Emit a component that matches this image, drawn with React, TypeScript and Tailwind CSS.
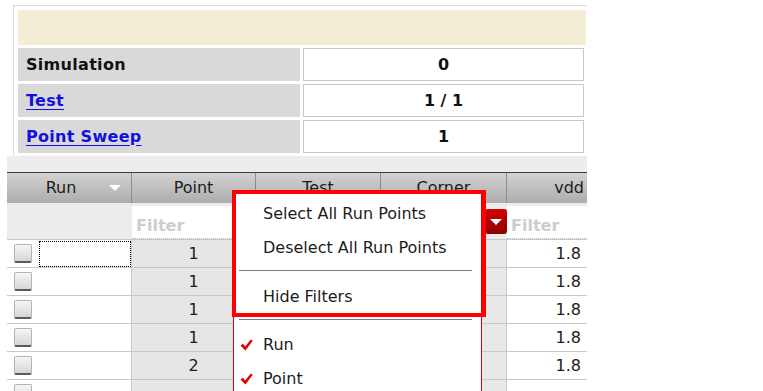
import React from "react";

const FONT = "font-['DejaVu_Sans',sans-serif]";
const COLS = "grid grid-cols-[125px_124px_125px_126px_80px]";

const SUMMARY = [
  { label: "Simulation", value: "0", link: false },
  { label: "Test", value: "1 / 1", link: true },
  { label: "Point Sweep", value: "1", link: true },
];

// last row is only partly in view, its values sit below the fold
const ROWS = [
  { point: "1", vdd: "1.8" },
  { point: "1", vdd: "1.8" },
  { point: "1", vdd: "1.8" },
  { point: "1", vdd: "1.8" },
  { point: "2", vdd: "1.8" },
  { point: "", vdd: "" },
];

/* ============================================================
   Small drawings
   ============================================================ */

function DownTriangle({ className = "" }: { className?: string }) {
  return (
    <svg width="12" height="6" viewBox="0 0 12 6" className={className} aria-hidden="true">
      <path d="M0 0 L12 0 L6 6 Z" fill="#ffffff" />
    </svg>
  );
}

function Check() {
  return (
    <svg width="13" height="12" viewBox="0 0 13 12" aria-hidden="true">
      <path d="M0.5 6.5 L3 4.8 L5.2 7.6 L10.8 0.5 L12.8 1.8 L5.4 11.5 Z" fill="#e00000" />
    </svg>
  );
}

function CheckBox() {
  return (
    <span className="block w-[18px] h-[19px] rounded-[2px] border border-[#b4b4b4] border-b-[2px] border-b-[#5a5a5a] bg-gradient-to-b from-[#f6f6f6] to-[#d6d6d6]" />
  );
}

/* ============================================================
   Summary block
   ============================================================ */

function Summary() {
  return (
    <div className="ml-[13px] mt-[5px] w-[574px] border-t border-l border-[#dcdcdc] pt-[4px] pl-[4px] pb-[3px]">
      <div className="w-[568px] h-[35px] bg-[#f5eed6]" />
      <div className="flex flex-col gap-[3px] mt-[3px]">
        {SUMMARY.map((r) => (
          <div key={r.label} className="flex gap-[3px] h-[33px]">
            <div className="w-[282px] bg-[#d9d9d9] flex items-center pl-[8px] text-[16px] font-bold tracking-[0.3px]">
              {r.link ? (
                <span className="text-[#1010e0] underline underline-offset-[3px]">{r.label}</span>
              ) : (
                <span className="text-[#111]">{r.label}</span>
              )}
            </div>
            <div className="w-[281px] bg-white border border-[#c8c8c8] flex items-center justify-center text-[16px] font-bold text-[#111]">
              {r.value}
            </div>
          </div>
        ))}
      </div>
    </div>
  );
}

/* ============================================================
   Results table
   ============================================================ */

function HeaderRow() {
  const cell =
    "h-[30px] flex items-center border-r border-[#8c8c8c] text-[16px] text-[#1c1c1c]";
  return (
    <div className={`${COLS} bg-gradient-to-b from-[#d2d2d2] to-[#adadad] border-t border-[#3c3c3c]`}>
      <div className={`${cell} pl-[6px]`}>
        <span className="flex-1 text-center">Run</span>
        <DownTriangle className="mr-[10px]" />
      </div>
      <div className={`${cell} justify-center`}>Point</div>
      <div className={`${cell} justify-center`}>Test</div>
      <div className={`${cell} justify-center`}>Corner</div>
      <div className={`${cell} justify-end pr-[3px] border-r-0`}>vdd</div>
    </div>
  );
}

function FilterBox() {
  return (
    <div className="mt-[3px] h-[33px] bg-white border-b border-dotted border-[#b8b8b8] flex items-center pt-[8px] pl-[4px] text-[16px] font-bold text-[#cdcdcd]">
      Filter
    </div>
  );
}

function FilterRow() {
  return (
    <div className={`${COLS} h-[37px] bg-[#ececec] border-b border-[#c8c8c8]`}>
      <div />
      <FilterBox />
      <FilterBox />
      <div className="flex justify-end items-start pt-[6px]">
        <div className="w-[22px] h-[25px] rounded-[3px] bg-gradient-to-b from-[#d60000] to-[#8c0000] flex items-center justify-center">
          <DownTriangle />
        </div>
      </div>
      <FilterBox />
    </div>
  );
}

function DataRow({ point, vdd, focused }: { point: string; vdd: string; focused: boolean }) {
  const cell = "h-[28px] border-r border-b border-[#c9c9c9] flex items-center text-[16px] text-[#1c1c1c]";
  return (
    <div className={COLS}>
      <div className={`${cell} pl-[7px] gap-[7px] bg-white`}>
        <CheckBox />
        {focused && <span className="flex-1 h-[26px] border border-dotted border-black" />}
      </div>
      <div className={`${cell} justify-center bg-[#e6e6e6]`}>{point}</div>
      <div className={`${cell} bg-white`} />
      <div className={`${cell} bg-[#e8e8e8]`} />
      <div className={`${cell} justify-end pr-[6px] bg-white border-r-0`}>{vdd}</div>
    </div>
  );
}

function ResultsTable() {
  return (
    <div className="ml-[7px] w-[580px]">
      <HeaderRow />
      <FilterRow />
      {ROWS.map((r, i) => (
        <DataRow key={i} point={r.point} vdd={r.vdd} focused={i === 0} />
      ))}
    </div>
  );
}

/* ============================================================
   Context menu (with red annotation frame)
   ============================================================ */

function MenuItem({ label, checked = false }: { label: string; checked?: boolean }) {
  return (
    <div className="h-[34px] flex items-center text-[16px] text-[#1c1c1c]">
      <span className="w-[29px] pl-[6px] flex items-center">{checked && <Check />}</span>
      <span>{label}</span>
    </div>
  );
}

function Separator({ h }: { h: string }) {
  return (
    <div className={`${h} pt-[5px]`}>
      <div className="ml-[5px] w-[233px] h-px bg-[#7c7c7c]" />
    </div>
  );
}

function ContextMenu() {
  return (
    <>
      <div className="absolute left-[233px] top-[192px] w-[249px] h-[199px] bg-white border-x border-[#e00000] pt-[5px] overflow-hidden">
        <MenuItem label="Select All Run Points" />
        <MenuItem label="Deselect All Run Points" />
        <Separator h="h-[15px]" />
        <MenuItem label="Hide Filters" />
        <Separator h="h-[14px]" />
        <MenuItem label="Run" checked />
        <MenuItem label="Point" checked />
      </div>
      <div className="absolute left-[232px] top-[190px] w-[254px] h-[127px] border-[4px] border-[#ff0000]" />
    </>
  );
}

export default function App() {
  return (
    <div className={`relative w-[763px] h-[391px] overflow-hidden bg-white ${FONT}`}>
      <Summary />
      <div className="ml-[7px] w-[580px] h-[16px] bg-[#ededed]" />
      <ResultsTable />
      <ContextMenu />
    </div>
  );
}
